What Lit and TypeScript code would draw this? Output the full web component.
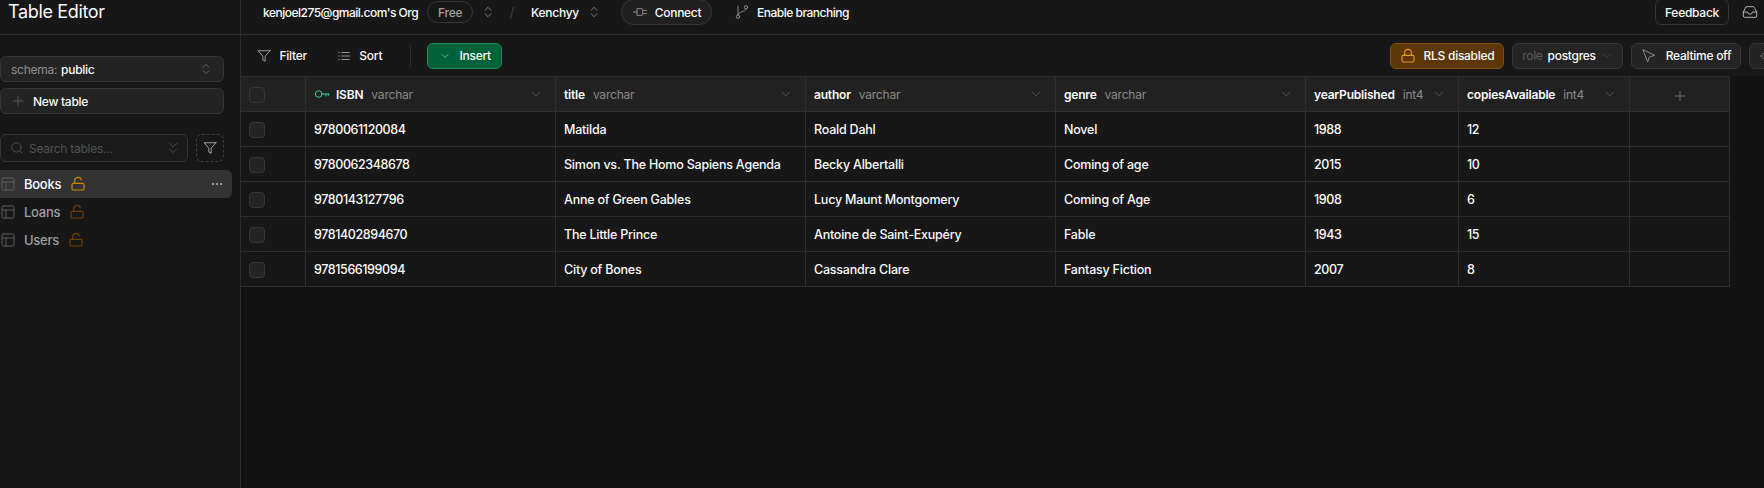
import { html, svg, css, LitElement, TemplateResult } from "lit";
import { customElement } from "lit/decorators.js";

const icon = (size: number, body: TemplateResult | unknown, cls = "") => html`<svg
  class="icon ${cls}"
  width=${size}
  height=${size}
  viewBox="0 0 24 24"
  fill="none"
  stroke="currentColor"
  stroke-width="1.5"
  stroke-linecap="round"
  stroke-linejoin="round"
>${body}</svg>`;

const FUNNEL = svg`<path d="M22 3H2l8 9.46V19l4 2v-8.54L22 3z" />`;
const LIST = svg`<path d="M8 6h13M8 12h13M8 18h13M3 6h1M3 12h1M3 18h1" />`;
const UP_DOWN = svg`<path d="m7 15 5 5 5-5M7 9l5-5 5 5" />`;
const DOWN = svg`<path d="m6 9 6 6 6-6" />`;
const DOUBLE_DOWN = svg`<path d="m6 4 6 6 6-6M6 14l6 6 6-6" />`;
const PLUS = svg`<path d="M12 4v16M4 12h16" />`;
const SEARCH = svg`<circle cx="11" cy="11" r="8" /><path d="m21 21-4.3-4.3" />`;
const TABLE = svg`<rect x="3" y="3" width="18" height="18" rx="2" /><path d="M3 9h18M9 9v12" />`;
const LOCKED = svg`<rect x="3" y="11" width="18" height="10" rx="2" /><path d="M7 11V7a5 5 0 0 1 10 0v4" />`;
const UNLOCKED = svg`<rect x="3" y="11" width="18" height="10" rx="2" /><path d="M7 11V7a5 5 0 0 1 9.9-1" />`;
const DOTS = svg`<circle cx="5" cy="12" r="1" fill="currentColor" /><circle cx="12" cy="12" r="1" fill="currentColor" /><circle cx="19" cy="12" r="1" fill="currentColor" />`;
const KEY = svg`<circle cx="7" cy="12" r="5" /><path d="M12 12h10M18 12v3M22 12v2" />`;
const PLUG = svg`<path d="M2 12h6M8 7h7a1 1 0 0 1 1 1v8a1 1 0 0 1-1 1H8zM16 9.5h6M16 14.5h6" />`;
const BRANCH = svg`<circle cx="6" cy="19" r="2.5" /><circle cx="18" cy="5" r="2.5" /><path d="M6 3v13.5M18 7.5c0 5-12 3-12 9" />`;
const INBOX = svg`<path d="M22 12h-6l-2 3h-4l-2-3H2" /><path d="M5.45 5.11 2 12v6a2 2 0 0 0 2 2h16a2 2 0 0 0 2-2v-6l-3.45-6.89A2 2 0 0 0 16.76 4H7.24a2 2 0 0 0-1.79 1.11z" />`;
const POINTER = svg`<path d="m3 3 7 18 2.5-7.5L20 11z" />`;
const EYE = svg`<path d="M2 12s4-7 10-7 10 7 10 7-4 7-10 7-10-7-10-7z" />`;

interface Column {
  name: string;
  type: string;
  key?: boolean;
}

const COLUMNS: Column[] = [
  { name: "ISBN", type: "varchar", key: true },
  { name: "title", type: "varchar" },
  { name: "author", type: "varchar" },
  { name: "genre", type: "varchar" },
  { name: "yearPublished", type: "int4" },
  { name: "copiesAvailable", type: "int4" },
];

const ROWS = [
  ["9780061120084", "Matilda", "Roald Dahl", "Novel", "1988", "12"],
  ["9780062348678", "Simon vs. The Homo Sapiens Agenda", "Becky Albertalli", "Coming of age", "2015", "10"],
  ["9780143127796", "Anne of Green Gables", "Lucy Maunt Montgomery", "Coming of Age", "1908", "6"],
  ["9781402894670", "The Little Prince", "Antoine de Saint-Exupéry", "Fable", "1943", "15"],
  ["9781566199094", "City of Bones", "Cassandra Clare", "Fantasy Fiction", "2007", "8"],
];

const TABLES = ["Books", "Loans", "Users"];

@customElement("app-root")
export class AppRoot extends LitElement {
  static styles = css`
    :host {
      display: block;
      width: 1764px;
      height: 488px;
      overflow: hidden;
      background: #121212;
      color: #fafafa;
      font-family: Inter, "Liberation Sans", sans-serif;
      font-size: 12px;
      font-weight: 500;
      letter-spacing: -0.27px;
    }
    .icon {
      flex: none;
      display: block;
    }

    .topbar {
      display: flex;
      height: 35px;
      box-sizing: border-box;
      background: #171717;
      border-bottom: 1px solid #2e2e2e;
    }
    .brand {
      width: 241px;
      box-sizing: border-box;
      height: 35px;
      padding: 0 0 13px 8px;
      border-right: 1px solid #2e2e2e;
      display: flex;
      align-items: center;
      font-size: 18px;
      font-weight: 400;
      letter-spacing: -0.35px;
    }
    .crumbs {
      flex: 1;
      height: 24px;
      display: flex;
      align-items: center;
      padding: 0 6px 0 22px;
    }
    .org {
      margin-right: 9px;
      letter-spacing: -0.5px;
    }
    .project {
      margin-right: 8px;
    }
    .pill {
      box-sizing: border-box;
      display: flex;
      align-items: center;
      justify-content: center;
      border: 1px solid #363636;
      border-radius: 14px;
    }
    .plan {
      width: 46px;
      height: 22px;
      color: #a0a0a0;
      margin-right: 8px;
    }
    .muted-icon {
      color: #8a8a8a;
    }
    .slash {
      color: #3a3a3a;
      margin: 0 17px 0 14px;
      font-size: 14px;
    }
    .connect {
      width: 91px;
      height: 26px;
      gap: 7px;
      margin-left: 20px;
      background: #1f1f1f;
    }
    .branching {
      display: flex;
      align-items: center;
      gap: 7px;
      margin-left: 22px;
      letter-spacing: -0.5px;
    }
    .feedback {
      margin-left: auto;
      width: 74px;
      height: 26px;
      box-sizing: border-box;
      display: flex;
      align-items: center;
      justify-content: center;
      border: 1px solid #363636;
      border-radius: 6px;
    }
    .inbox {
      margin-left: 13px;
      color: #b0b0b0;
    }

    .body {
      display: flex;
      height: 453px;
    }
    .sidebar {
      width: 241px;
      flex: none;
      box-sizing: border-box;
      background: #171717;
      border-right: 1px solid #2e2e2e;
      padding-top: 21px;
    }
    .field {
      width: 224px;
      height: 26px;
      box-sizing: border-box;
      display: flex;
      align-items: center;
      background: #242424;
      border: 1px solid #363636;
      border-radius: 6px;
      padding: 0 10px;
    }
    .field + .field {
      margin-top: 6px;
    }
    .schema-label {
      color: #8f8f8f;
      margin-right: 4px;
      font-weight: 400;
    }
    .field .end {
      margin-left: auto;
      color: #707070;
    }
    .new-icon {
      color: #5a5a5a;
      margin-right: 8px;
    }
    .search-row {
      display: flex;
      gap: 8px;
      margin-top: 20px;
      width: 224px;
    }
    .search {
      flex: 1;
      height: 28px;
      box-sizing: border-box;
      display: flex;
      align-items: center;
      gap: 5px;
      padding: 0 7px 0 9px;
      background: #1a1a1a;
      border: 1px solid #363636;
      border-radius: 6px;
      color: #525252;
      font-weight: 400;
    }
    .search .end {
      margin-left: auto;
    }
    .filter-tables {
      width: 28px;
      height: 28px;
      box-sizing: border-box;
      display: flex;
      align-items: center;
      justify-content: center;
      border: 1px dashed #404040;
      border-radius: 6px;
      color: #b4b4b4;
    }
    .tables {
      margin-top: 8px;
      width: 232px;
    }
    .table-item {
      height: 28px;
      display: flex;
      align-items: center;
      border-radius: 0 6px 6px 0;
      color: #a0a0a0;
      font-size: 13px;
    }
    .table-item.active {
      background: #333;
      color: #fafafa;
    }
    .table-icon {
      color: #5c5c5c;
      margin-right: 8px;
    }
    .lock {
      margin-left: 9px;
      color: #6a4208;
      stroke-width: 1.75;
    }
    .active .lock {
      color: #c8880f;
    }
    .dots {
      margin-left: auto;
      margin-right: 8px;
      color: #b4b4b4;
    }

    .main {
      flex: 1;
      min-width: 0;
    }
    .toolbar {
      height: 41px;
      box-sizing: border-box;
      display: flex;
      align-items: center;
      background: #171717;
      padding-left: 16px;
    }
    .tool {
      display: flex;
      align-items: center;
      gap: 8.5px;
    }
    .tool .icon {
      color: #a8a8a8;
    }
    .tool + .tool {
      margin-left: 30px;
    }
    .divider {
      width: 1px;
      height: 20px;
      background: #2e2e2e;
      margin: 0 16px 0 28px;
    }
    .insert {
      width: 75px;
      height: 26px;
      box-sizing: border-box;
      display: flex;
      align-items: center;
      justify-content: center;
      gap: 9px;
      background: #006239;
      border: 1px solid #1e8a58;
      border-radius: 6px;
    }
    .insert .icon {
      color: #7fd0a8;
    }
    .actions {
      margin-left: auto;
      display: flex;
      gap: 8px;
      margin-right: -25px;
    }
    .action {
      height: 26px;
      box-sizing: border-box;
      display: flex;
      align-items: center;
      justify-content: center;
      background: #242424;
      border: 1px solid #363636;
      border-radius: 6px;
    }
    .rls {
      width: 114px;
      gap: 8px;
      background: #5c3606;
      border-color: #7f4e0b;
    }
    .rls .icon {
      color: #e0981f;
      stroke-width: 1.75;
    }
    .role {
      width: 111px;
      gap: 5px;
    }
    .role i {
      font-style: normal;
      color: #5a5a5a;
      font-weight: 400;
    }
    .role .icon {
      color: #4e4e4e;
    }
    .realtime {
      width: 110px;
      gap: 9px;
    }
    .realtime .icon {
      color: #8a8a8a;
    }
    .clipped {
      width: 40px;
      justify-content: flex-start;
      padding-left: 10px;
      color: #8a8a8a;
    }

    .grid {
      display: grid;
      grid-template-columns: 65px 250px 250px 250px 250px 153px 171px 100px;
      width: 1489px;
      border-top: 1px solid #2e2e2e;
      border-bottom: 1px solid #2e2e2e;
      background: #171717;
    }
    .cell {
      height: 35px;
      box-sizing: border-box;
      display: flex;
      align-items: center;
      padding: 0 8px;
      border-right: 1px solid #2e2e2e;
      border-bottom: 1px solid #2e2e2e;
      font-size: 12.5px;
      letter-spacing: -0.22px;
    }
    .cell.num {
      letter-spacing: -0.4px;
    }
    .cell.last {
      border-bottom: none;
      height: 34px;
    }
    .head {
      background: #212121;
      gap: 8px;
      font-size: 12px;
      letter-spacing: -0.2px;
    }
    .head b {
      font-weight: 600;
    }
    .head .type {
      color: #8a8a8a;
      font-weight: 400;
    }
    .head .caret {
      margin-left: auto;
      margin-right: 4px;
      color: #5e5e5e;
    }
    .head .key {
      color: #3ecf8e;
      margin-right: -2px;
    }
    .check {
      padding-top: 1px;
    }
    .check span {
      width: 16px;
      height: 16px;
      box-sizing: border-box;
      background: #242424;
      border: 1px solid #363636;
      border-radius: 4px;
    }
    .add {
      justify-content: center;
      color: #7a7a7a;
      padding-top: 4px;
    }
  `;

  render() {
    return html`
      <div class="topbar">
        <div class="brand">Table Editor</div>
        <div class="crumbs">
          <span class="org">kenjoel275@gmail.com's Org</span>
          <span class="pill plan">Free</span>
          ${icon(14, UP_DOWN, "muted-icon")}
          <span class="slash">/</span>
          <span class="project">Kenchyy</span>
          ${icon(14, UP_DOWN, "muted-icon")}
          <span class="pill connect">${icon(16, PLUG, "muted-icon")} Connect</span>
          <span class="branching">${icon(16, BRANCH, "muted-icon")} Enable branching</span>
          <span class="feedback">Feedback</span>
          ${icon(16, INBOX, "inbox")}
        </div>
      </div>
      <div class="body">
        <aside class="sidebar">
          <div class="field">
            <span class="schema-label">schema:</span> public
            ${icon(14, UP_DOWN, "end")}
          </div>
          <div class="field">${icon(14, PLUS, "new-icon")} New table</div>
          <div class="search-row">
            <div class="search">
              ${icon(14, SEARCH)} Search tables...
              ${icon(14, DOUBLE_DOWN, "end")}
            </div>
            <div class="filter-tables">${icon(14, FUNNEL)}</div>
          </div>
          <div class="tables">
            ${TABLES.map(
              (name, i) => html`<div class="table-item ${i === 0 ? "active" : ""}">
                ${icon(16, TABLE, "table-icon")} ${name}
                ${icon(16, UNLOCKED, "lock")}
                ${i === 0 ? icon(14, DOTS, "dots") : ""}
              </div>`,
            )}
          </div>
        </aside>
        <main class="main">
          <div class="toolbar">
            <span class="tool">${icon(14, FUNNEL)} Filter</span>
            <span class="tool">${icon(14, LIST)} Sort</span>
            <span class="divider"></span>
            <span class="insert">${icon(12, DOWN)} Insert</span>
            <div class="actions">
              <span class="action rls">${icon(16, LOCKED)} RLS disabled</span>
              <span class="action role"><i>role</i> postgres ${icon(12, DOWN)}</span>
              <span class="action realtime">${icon(16, POINTER)} Realtime off</span>
              <span class="action clipped">${icon(14, EYE)}</span>
            </div>
          </div>
          <div class="grid">
            <div class="cell head check"><span></span></div>
            ${COLUMNS.map(
              (c) => html`<div class="cell head">
                ${c.key ? icon(16, KEY, "key") : ""}
                <b>${c.name}</b>
                <span class="type">${c.type}</span>
                ${icon(14, DOWN, "caret")}
              </div>`,
            )}
            <div class="cell head add">${icon(14, PLUS)}</div>
            ${ROWS.map((row, r) => {
              const last = r === ROWS.length - 1 ? "last" : "";
              return html`
                <div class="cell check ${last}"><span></span></div>
                ${row.map(
                  (v) => html`<div class="cell ${last} ${/^\d+$/.test(v) ? "num" : ""}">${v}</div>`,
                )}
                <div class="cell ${last}"></div>
              `;
            })}
          </div>
        </main>
      </div>
    `;
  }
}

declare global {
  interface HTMLElementTagNameMap {
    "app-root": AppRoot;
  }
}
